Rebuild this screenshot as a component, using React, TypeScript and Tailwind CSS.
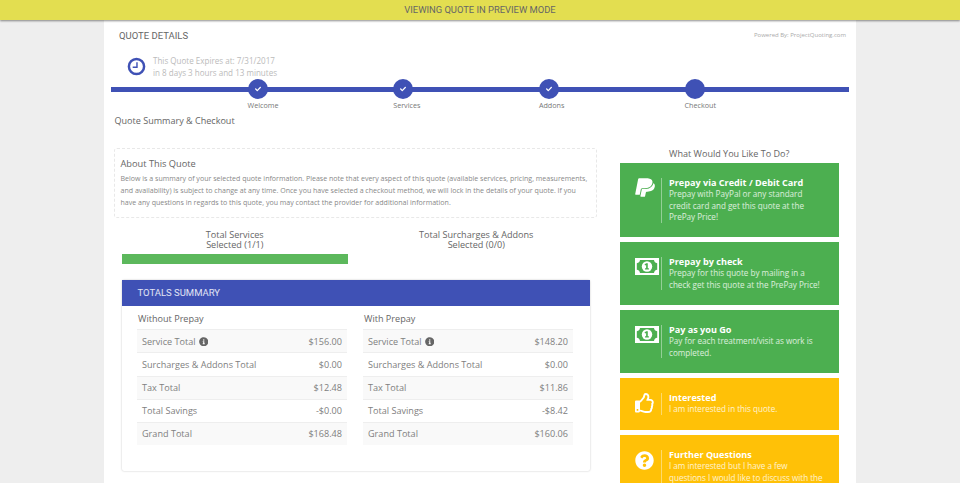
import { FaCheck, FaInfoCircle, FaPaypal, FaQuestionCircle, FaRegThumbsUp } from "react-icons/fa"

const steps = [
  { label: "Welcome", done: true },
  { label: "Services", done: true },
  { label: "Addons", done: true },
  { label: "Checkout", done: false },
]

const withoutPrepay = [
  ["Service Total", "$156.00"],
  ["Surcharges & Addons Total", "$0.00"],
  ["Tax Total", "$12.48"],
  ["Total Savings", "-$0.00"],
  ["Grand Total", "$168.48"],
]

const withPrepay = [
  ["Service Total", "$148.20"],
  ["Surcharges & Addons Total", "$0.00"],
  ["Tax Total", "$11.86"],
  ["Total Savings", "-$8.42"],
  ["Grand Total", "$160.06"],
]

function MoneyIcon() {
  return (
    <svg viewBox="0 0 24 17" className="mt-px h-[17px] w-6" fill="white">
      <path
        fillRule="evenodd"
        d="M0 0h24v17H0zM5 2C4.800 3.800 3.600 5 1.800 5.200v6.600C3.600 12 4.800 13.200 5 15h14c.2-1.800 1.400-3 3.200-3.200V5.200C20.400 5 19.200 3.800 19 2z"
      />
      <circle cx="12" cy="8.500" r="5.200" />
      <path d="M11.100 5.300h1.700v5h1.100v1.300h-3.900v-1.300h1.100V7l-1 .6-.6-1z" fill="#4caf50" />
    </svg>
  )
}

function PrepayTable({ title, rows }: { title: string; rows: string[][] }) {
  return (
    <div className="w-[210px]">
      <div className="h-[23px] pl-px text-[9.100px] leading-[25px] text-[#666]">{title}</div>
      <div>
        {rows.map(([label, value], i) => (
          <div
            key={label}
            className={`flex h-[23.100px] items-center justify-between border-t border-[#eee] px-[5px] text-[9.100px] text-[#808080] ${
              i % 2 === 0 ? "bg-[#f9f9f9]" : "bg-white"
            }`}
          >
            <span className="flex items-center gap-[3px]">
              {label}
              {i === 0 && <FaInfoCircle className="h-[9.500px] w-[9.500px] text-[#666]" />}
            </span>
            <span>{value}</span>
          </div>
        ))}
      </div>
    </div>
  )
}

function ActionCard({
  color,
  height,
  icon,
  title,
  lines,
}: {
  color: string
  height: string
  icon: React.ReactNode
  title: string
  lines: string[]
}) {
  return (
    <div className={`flex shrink-0 items-start pt-[15px] pl-[15px] pr-2 text-white ${color} ${height}`}>
      <div className="flex w-[26px] shrink-0">{icon}</div>
      <div className="border-l border-white/40 pl-[7.500px]">
        <div className="-mt-[1.500px] text-[9.100px] leading-[11.500px] font-bold">{title}</div>
        {lines.map((line) => (
          <div key={line} className="text-[8.100px] leading-[11.500px] whitespace-nowrap text-white/80">
            {line}
          </div>
        ))}
      </div>
    </div>
  )
}

export default function App() {
  return (
    <div className="h-[483px] overflow-hidden bg-[#eee] font-['Open_Sans',sans-serif]">
      <div className="relative z-10 h-[19.500px] bg-[#e3de50] text-center font-['Roboto',sans-serif] text-[9.400px] leading-[19.500px] text-[#666] shadow-[0_1px_2px_rgba(0,0,0,0.45)]">
        VIEWING QUOTE IN PREVIEW MODE
      </div>

      <div className="mx-auto h-[600px] w-[752px] bg-white">
        <div className="flex items-start justify-between pt-[10px] pl-[15px] pr-[10px]">
          <h1 className="font-['Roboto',sans-serif] text-[9.500px] leading-[11px] text-[#666]">QUOTE DETAILS</h1>
          <span className="text-[6px] leading-[11px] text-[#aaa]">Powered By: ProjectQuoting.com</span>
        </div>

        <div className="mt-[14.500px] flex items-center pl-[23px]">
          <svg viewBox="0 0 20 20" className="h-[19px] w-[19px]" fill="none" stroke="#3f51b5">
            <circle cx="10" cy="10" r="8" strokeWidth="2.600" />
            <path d="M10.500 5.500v5.200H6" strokeWidth="1.500" />
          </svg>
          <div className="ml-[7px] text-[8.050px] leading-[11.700px] text-[#bbb]">
            <div>This Quote Expires at: 7/31/2017</div>
            <div>in 8 days 3 hours and 13 minutes</div>
          </div>
        </div>

        <div className="relative mt-[0.500px] ml-[7px] h-[40px] w-[737.500px]">
          <div className="absolute top-[8px] left-0 h-[5px] w-full bg-[#3f51b5]" />
          <div className="relative flex pl-[136.500px]">
            {steps.map((step) => (
              <div key={step.label} className="w-[145.700px]">
                <div className="flex h-5 w-5 items-center justify-center rounded-full bg-[#3f51b5] text-white">
                  {step.done && <FaCheck className="h-[6px] w-[6px]" />}
                </div>
                <div className="mt-[1.500px] text-[7.200px] leading-[11px] text-[#777]">{step.label}</div>
              </div>
            ))}
          </div>
        </div>

        <div className="mt-[-4.500px] pl-[10.500px] text-[9.050px] leading-[14px] text-[#666]">Quote Summary &amp; Checkout</div>

        <div className="mt-[4px] flex items-start pl-[10px]">
          <div className="w-[483px]">
            <div className="mt-[15.500px] h-[70.500px] rounded-[3px] border border-dashed border-[#e8e8e8] px-[5.500px] pt-[8px]">
              <div className="text-[9.250px] leading-[14px] text-[#666]">About This Quote</div>
              <p className="mt-[2.500px] text-[7.050px] leading-[11.900px] whitespace-nowrap text-[#888]">
                Below is a summary of your selected quote information. Please note that every aspect of this quote (available services, pricing, measurements,
                <br />
                and availability) is subject to change at any time. Once you have selected a checkout method, we will lock in the details of your quote. If you
                <br />
                have any questions in regards to this quote, you may contact the provider for additional information.
              </p>
            </div>

            <div className="mt-[12px] ml-[7.500px] flex w-[468.500px] gap-[15px]">
              <div className="w-[226.500px]">
                <div className="text-center text-[9.100px] leading-[9.700px] text-[#666]">
                  Total Services
                  <br />
                  Selected (1/1)
                </div>
                <div className="mt-[4px] h-[10px] bg-[#5cb85c]" />
              </div>
              <div className="w-[226.500px] text-center text-[9.100px] leading-[9.700px] text-[#666]">
                Total Surcharges &amp; Addons
                <br />
                Selected (0/0)
              </div>
            </div>

            <div className="mt-[16px] ml-[7.500px] h-[191px] w-[468.500px] rounded-[2px] bg-white shadow-[0_0_2px_rgba(0,0,0,0.25)]">
              <div className="h-[26.500px] bg-[#3f51b5] pl-4 font-['Roboto',sans-serif] text-[9.500px] leading-[26.500px] text-white/85">
                TOTALS SUMMARY
              </div>
              <div className="flex gap-[16px] pl-[15.500px]">
                <PrepayTable title="Without Prepay" rows={withoutPrepay} />
                <PrepayTable title="With Prepay" rows={withPrepay} />
              </div>
            </div>
          </div>

          <div className="ml-[22.500px] flex h-[360px] w-[219.500px] flex-col">
            <div className="mt-[14.500px] h-[13.500px] text-center text-[9.050px] leading-[14px] text-[#666]">What Would You Like To Do?</div>
            <div className="mt-[3px] flex flex-col gap-[5px]">
              <ActionCard
                color="bg-[#4caf50]"
                height="h-[74px]"
                icon={<FaPaypal className="-mt-px ml-[2px] h-[21px] w-[16px] scale-x-125" />}
                title="Prepay via Credit / Debit Card"
                lines={["Prepay with PayPal or any standard", "credit card and get this quote at the", "PrePay Price!"]}
              />
              <ActionCard
                color="bg-[#4caf50]"
                height="h-[63px]"
                icon={<MoneyIcon />}
                title="Prepay by check"
                lines={["Prepay for this quote by mailing in a", "check get this quote at the PrePay Price!"]}
              />
              <ActionCard
                color="bg-[#4caf50]"
                height="h-[63px]"
                icon={<MoneyIcon />}
                title="Pay as you Go"
                lines={["Pay for each treatment/visit as work is", "completed."]}
              />
              <ActionCard
                color="bg-[#ffc107]"
                height="h-[52px]"
                icon={<FaRegThumbsUp className="h-5 w-5" />}
                title="Interested"
                lines={["I am interested in this quote."]}
              />
              <ActionCard
                color="bg-[#ffc107]"
                height="h-[63px]"
                icon={<FaQuestionCircle className="mt-px h-[19px] w-[19px]" />}
                title="Further Questions"
                lines={["I am interested but I have a few", "questions I would like to discuss with the", "provider."]}
              />
            </div>
          </div>
        </div>
      </div>
    </div>
  )
}
